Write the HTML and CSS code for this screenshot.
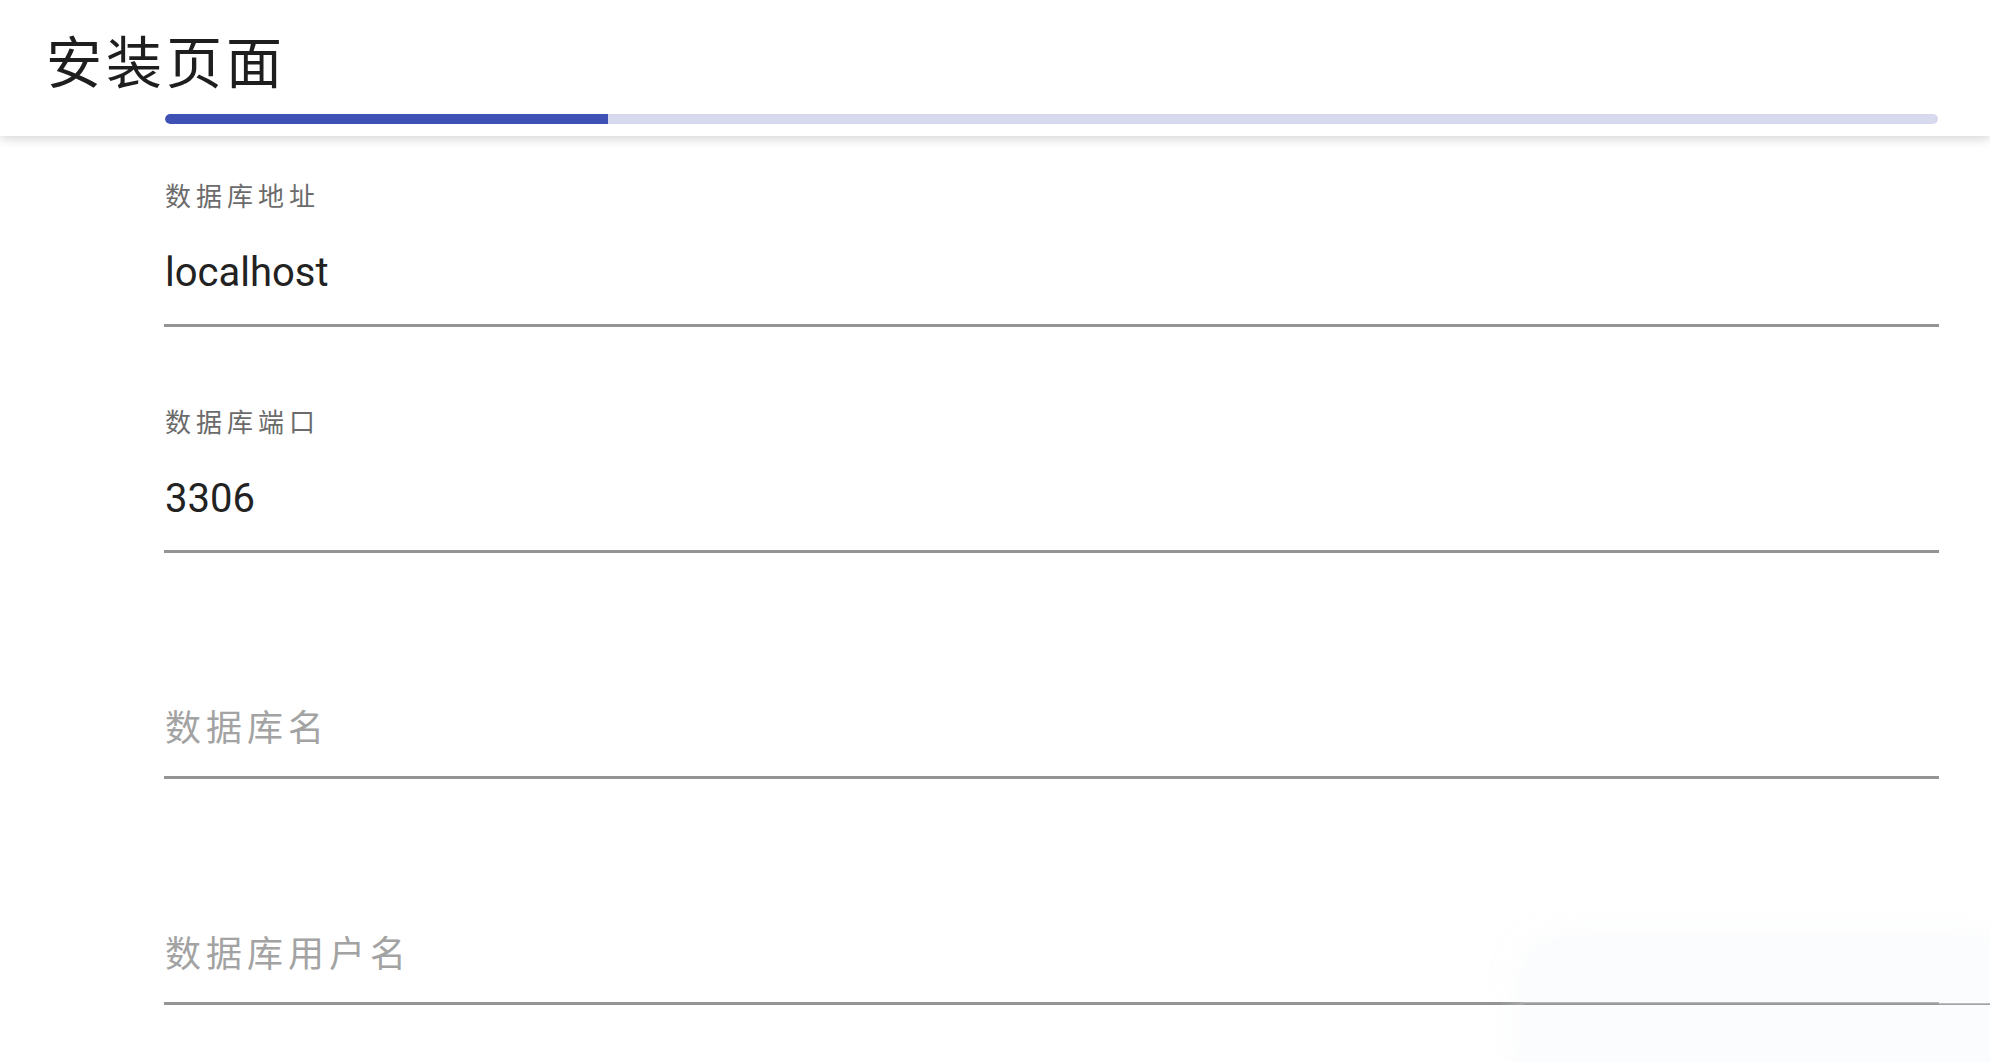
FILE: index.html
```html
<!DOCTYPE html>
<html lang="zh">
<head>
<meta charset="utf-8">
<title>安装页面</title>
<link rel="stylesheet" href="styles.css">
</head>
<body>
<header class="topbar">
  <h1 class="title">安装页面</h1>
  <div class="progress"><div class="progress-fill" style="width:25%"></div></div>
</header>
<main class="form">
  <div class="field">
    <div class="field-label">数据库地址</div>
    <div class="field-input">localhost</div>
  </div>
  <div class="field">
    <div class="field-label">数据库端口</div>
    <div class="field-input">3306</div>
  </div>
  <div class="field">
    <div class="field-label"></div>
    <div class="field-input placeholder">数据库名</div>
  </div>
  <div class="field">
    <div class="field-label"></div>
    <div class="field-input placeholder">数据库用户名</div>
  </div>
</main>
<div class="ghost-toast"><div class="ghost-line"></div></div>
</body>
</html>
```
FILE: styles.css
```css
html, body {
  margin: 0;
  padding: 0;
  background: #ffffff;
  height: 100%;
  overflow: hidden;
}
body {
  font-family: Roboto, "Noto Sans CJK SC", sans-serif;
  color: #212121;
  position: relative;
}
.topbar {
  height: 136px;
  box-sizing: border-box;
  background: #ffffff;
  box-shadow: 0 3px 10px rgba(0, 0, 0, 0.16);
  position: relative;
  z-index: 2;
  padding-top: 30px;
}
.title {
  margin: 0 0 0 46px;
  font-family: "Noto Sans CJK SC", sans-serif;
  font-weight: 400;
  font-size: 56px;
  line-height: 66px;
  letter-spacing: 4px;
  color: #1e1e1e;
  height: 66px;
  position: relative;
  top: -4px;
}
.progress {
  margin: 18px 52px 0 165px;
  height: 10px;
  border-radius: 5px;
  background: #d7daef;
  overflow: hidden;
}
.progress-fill {
  height: 100%;
  background: #3f51b5;
  border-radius: 5px 0 0 5px;
}
.form {
  padding: 45px 51px 0 164px;
  display: flex;
  flex-direction: column;
  gap: 80px;
}
.field {
  border-bottom: 3px solid #949494;
  padding-bottom: 27px;
}
.field-label {
  height: 28px;
  font-family: "Noto Sans CJK SC", sans-serif;
  font-size: 26px;
  line-height: 28px;
  letter-spacing: 5px;
  color: #6b6b6b;
  margin-bottom: 40px;
  padding-left: 1px;
}
.field-input {
  height: 48px;
  font-size: 40px;
  line-height: 48px;
  color: #222222;
  padding-left: 1px;
}
.field-input.placeholder {
  font-family: "Noto Sans CJK SC", sans-serif;
  font-size: 36px;
  letter-spacing: 5px;
  color: #a3a3a3;
}
.ghost-toast {
  position: absolute;
  left: 1523px;
  top: 942px;
  width: 500px;
  height: 160px;
  border-radius: 40px;
  background: rgba(244, 247, 249, 0.35);
  box-shadow: 0 0 30px rgba(240, 244, 247, 0.5);
}
.ghost-line {
  position: absolute;
  left: 0;
  right: 0;
  top: 61px;
  height: 2px;
  background: linear-gradient(to bottom, rgba(150,150,150,0.5), rgba(140,140,140,0.9));
}
```
